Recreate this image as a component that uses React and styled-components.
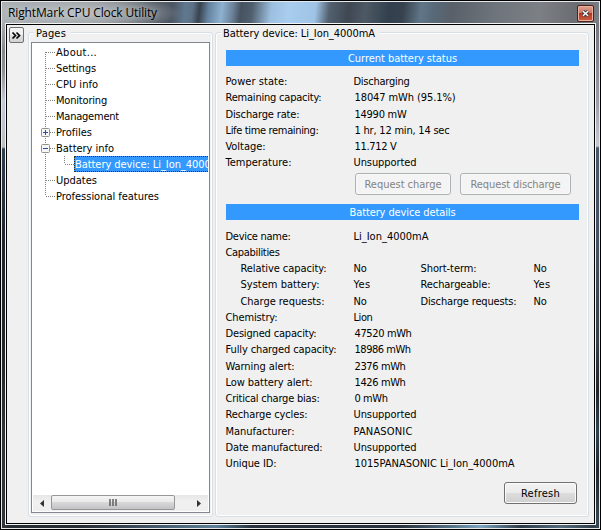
import React, { useLayoutEffect, useRef, useState } from "react";
import styled, { createGlobalStyle } from "styled-components";

const Global = createGlobalStyle`
  * { box-sizing: border-box; }
  body { margin: 0; width: 601px; height: 530px; overflow: hidden; background: #fff; }
`;

const Frame = styled.div`
  width: 601px;
  height: 530px;
  border: 1px solid #000;
  background:
    linear-gradient(180deg, #b4babd 0 12px, #85888b 50px, #8c9196 70px, #c3cbd6 100px, #b9bec4 146px, #2f3f4e 148px, #1f252d 240px, #22262d 350px, #30353b 440px, #30353b) 0 0 / 6px 100% no-repeat,
    linear-gradient(180deg, #6d6e73, #80838c 50px, #9a9da6 100px, #c6c9d0 145px, #4b586b 147px, #465266 240px, #3a4149 340px, #22252a 390px, #2d4454 430px, #22262c 470px, #33454f 520px) 100% 0 / 6px 100% no-repeat,
    linear-gradient(90deg, #282d34 0 80px, #35424f 120px, #5d8099 215px, #2a3440 250px, #29333e 400px, #537186 450px, #7da3bf 480px, #2e3b47 520px, #516b7e 560px, #2b343e) 0 100% / 100% 6px no-repeat,
    #353d47;
  font-family: "DejaVu Sans Condensed", "DejaVu Sans", sans-serif;
  font-stretch: condensed;
  font-size: 11px;
  line-height: 18px;
  color: #000;
  white-space: pre;
`;

const Highlight = styled.div`
  width: 100%;
  height: 100%;
  border: 1px solid #e6e9ec;
  padding: 0 3px 3px;
  display: flex;
  flex-direction: column;
`;

const TitleBar = styled.header`
  height: 21px;
  flex: none;
  margin: 0 -3px;
  padding: 0 5px 0 6px;
  display: flex;
  justify-content: space-between;
  background:
    radial-gradient(ellipse 100px 17px at 80px 11px, rgba(205, 209, 212, 0.65), rgba(190, 195, 199, 0.45) 60%, transparent),
    linear-gradient(97deg, #aab0b3 0, #8d9295 90px, #59616a 150px, #4c5663 170px, #607990 183px, #5d7186 190px, #39434f 197px, #6583a0 206px, #8fb1d0 219px, #6c829a 230px, #46525f 238px, #4f5e6e 249px, #9cbfdf 268px, #a9cdee 285px, #9fc3e4 312px, #52606f 326px, #3f4852 345px, #4d5964 362px, #32404f 385px, #37424e 399px, #607688 417px, #586978 430px, #596069 448px, #6e747b 490px, #7c8085 535px, #6a6d72 570px, #7b7e84);
`;

const Title = styled.div`
  font-family: "Open Sans", "Noto Sans", sans-serif;
  font-stretch: normal;
  font-size: 12px;
  line-height: 22px;
  text-shadow: 0 0 5px rgba(255, 255, 255, 0.5);
`;

const CloseButton = styled.button`
  width: 17px;
  height: 17px;
  margin-top: 3px;
  padding: 0;
  display: grid;
  place-items: center;
  border: 1px solid #52201a;
  border-radius: 2px;
  box-shadow: inset 0 0 0 1px #eab09f;
  background: linear-gradient(#dfa195, #cf7360 48%, #b8351c 50%, #c96045);
`;

const Client = styled.main`
  flex: 1;
  min-height: 0;
  border: 1px solid #f4f4f4;
  display: flex;
`;

const ClientInner = styled.div`
  flex: 1;
  border: 1px solid #000;
  background: #f0f0f0;
  padding: 2px 4px 6px 2px;
  display: flex;
  align-items: flex-start;
`;

const ToggleButton = styled.button`
  width: 15px;
  height: 16px;
  padding: 0;
  display: grid;
  place-items: center;
  border: 1px solid #707070;
  border-radius: 2px;
  background: linear-gradient(#f4f4f4, #eee 50%, #dedede 50%, #d2d2d2);
`;

const Group = styled.section`
  width: ${(p) => p.$width}px;
  height: 485px;
  margin: 5px 0 0 ${(p) => p.$gap}px;
  border: 1px solid #d5dfe5;
  border-radius: 3px;
  box-shadow: inset 0 0 0 1px #fff;
  display: flex;
  flex-direction: column;
  padding: 0 ${(p) => p.$right}px 3px ${(p) => p.$left}px;
`;

const Legend = styled.div`
  align-self: flex-start;
  height: 16px;
  margin: -8px 0 0 ${(p) => p.$indent}px;
  padding: 0 5px 0 2px;
  background: #f0f0f0;
`;

const Tree = styled.div`
  flex: 1;
  margin: 1px 0 0;
  border: 1px solid #828790;
  background: #fff;
  padding: 1px;
  display: flex;
  flex-direction: column;
  justify-content: space-between;
  overflow: hidden;
`;

const TreeRow = styled.div`
  display: flex;
  height: 16px;
  align-items: stretch;
`;

const Branch = styled.svg`
  flex: none;
  display: block;
`;

const Node = styled.div`
  flex: ${(p) => (p.$selected ? "1" : "none")};
  min-width: 0;
  overflow: hidden;
  color: ${(p) => (p.$selected ? "#fff" : "#000")};
  background: ${(p) => (p.$selected ? "#3399ff" : "transparent")};
  border: ${(p) => (p.$selected ? "1px dotted #3a2a10" : "0")};
  border-right: 0;
  line-height: ${(p) => (p.$selected ? 16 : 18)}px;
`;

const ScrollBar = styled.div`
  height: 16px;
  display: flex;
  background: linear-gradient(#e6e6e6, #f0f0f0 40%, #efefef);
`;

const ScrollArrow = styled.div`
  width: 18px;
  display: grid;
  place-items: center;
`;

const Thumb = styled.div`
  width: 124px;
  height: 15px;
  border: 1px solid #979797;
  border-radius: 2px;
  background: linear-gradient(#f5f5f5, #e9e9eb 48%, #d8d8da 50%, #c3c3c7);
  display: grid;
  place-items: center;
`;

const Track = styled.div`
  flex: 1;
`;

const Banner = styled.div`
  height: 16px;
  flex: none;
  margin: ${(p) => p.$top}px 0 ${(p) => p.$bottom}px;
  background: #3399ff;
  color: #fff;
  text-align: center;
`;

const Row = styled.div`
  height: 16.25px;
  flex: none;
  margin-left: -0.5px;
  display: grid;
  grid-template-columns: ${(p) => (p.$nested ? "15px 113px 67px 113px 1fr" : "128px 1fr")};
`;

const Cell = styled.div`
  padding-left: ${(p) => (p.$nudge ? 1 : 0)}px;
`;

const Actions = styled.div`
  display: flex;
  justify-content: flex-end;
  gap: 9px;
  flex: none;
  margin: ${(p) => p.$top}px ${(p) => p.$right}px 0 0;
`;

const Button = styled.button`
  width: ${(p) => p.$width}px;
  height: 22px;
  padding: 2px 0 0;
  font: inherit;
  line-height: 18px;
  border: 1px solid ${(p) => (p.disabled ? "#adb2b5" : "#707070")};
  border-radius: 3px;
  color: ${(p) => (p.disabled ? "#838383" : "#000")};
  background: ${(p) => (p.disabled ? "#f4f4f4" : "linear-gradient(#f2f2f2, #ebebeb 50%, #dddddd 50%, #cfcfcf)")};
  box-shadow: inset 0 0 0 1px ${(p) => (p.disabled ? "#f8f8f8" : "#fbfbfb")};
`;

const Run = styled.span`
  display: inline-block;
  white-space: pre;
`;

/* Tracks a run of text so that it fills the given width. */
function Text({ w, children }) {
  const ref = useRef(null);
  const [spacing, setSpacing] = useState(0);
  useLayoutEffect(() => {
    const natural = ref.current.getBoundingClientRect().width;
    setSpacing((w - natural) / children.length);
  }, [w, children]);
  return <Run ref={ref} style={{ letterSpacing: `${spacing}px` }}>{children}</Run>;
}

const tree = [
  { label: "About...", w: 41 },
  { label: "Settings", w: 40 },
  { label: "CPU info", w: 42 },
  { label: "Monitoring", w: 51 },
  { label: "Management", w: 63 },
  { label: "Profiles", w: 36, box: "+" },
  { label: "Battery info", w: 58, box: "-" },
  { label: "Battery device: Li_Ion_4000mA", w: 152, child: true },
  { label: "Updates", w: 41 },
  { label: "Professional features", w: 103, last: true },
];

function Lines({ item, first }) {
  const width = item.child ? 41 : 23;
  const dots = { stroke: "#808080", strokeDasharray: "1 1", fill: "none" };
  return (
    <Branch width={width} height="16" viewBox={`0 0 ${width} 16`}>
      <path d={`M12.5 ${first ? 8 : 0}V${item.last ? 8 : 16}`} {...dots} />
      {item.child ? (
        <path d="M31.5 0V8M32 8.5H41" {...dots} />
      ) : (
        <path d="M13 8.5H22" {...dots} />
      )}
      {item.box && (
        <>
          <rect x="8.5" y="4.5" width="8" height="8" rx="1" fill="#f6f6f6" stroke="#919191" />
          <path d={item.box === "+" ? "M10 8.5H15M12.5 6V11" : "M10 8.5H15"} stroke="#2b4c9b" />
        </>
      )}
    </Branch>
  );
}

const status = [
  ["Power state:", 62, "Discharging", 56],
  ["Remaining capacity:", 96, "18047 mWh (95.1%)", 101],
  ["Discharge rate:", 74, "14990 mW", 52],
  ["Life time remaining:", 93, "1 hr, 12 min, 14 sec", 95],
  ["Voltage:", 40, "11.712 V", 42],
  ["Temperature:", 66, "Unsupported", 63],
];

const capabilities = [
  ["Relative capacity:", 86, "No", 13, "Short-term:", 56, "No", 13],
  ["System battery:", 79, "Yes", 17, "Rechargeable:", 70, "Yes", 17],
  ["Charge requests:", 84, "No", 13, "Discharge requests:", 96, "No", 13],
];

const details = [
  ["Chemistry:", 52, "Lion", 19],
  ["Designed capacity:", 91, "47520 mWh", 57],
  ["Fully charged capacity:", 111, "18986 mWh", 56],
  ["Warning alert:", 69, "2376 mWh", 51],
  ["Low battery alert:", 87, "1426 mWh", 51],
  ["Critical charge bias:", 94, "0 mWh", 33],
  ["Recharge cycles:", 82, "Unsupported", 63],
  ["Manufacturer:", 69, "PANASONIC", 59],
  ["Date manufactured:", 97, "Unsupported", 63],
  ["Unique ID:", 51, "1015PANASONIC Li_Ion_4000mA", 160],
];

function Cells({ cells, nested }) {
  const out = [];
  for (let i = 0; i < cells.length; i += 2) {
    out.push(
      <Cell key={i} $nudge={/^\d/.test(cells[i])}>
        <Text w={cells[i + 1]}>{cells[i]}</Text>
      </Cell>
    );
  }
  return <Row $nested={nested}>{nested && <div />}{out}</Row>;
}

export default function App() {
  return (
    <>
      <Global />
      <Frame>
        <Highlight>
          <TitleBar>
            <Title><Text w={149}>RightMark CPU Clock Utility</Text></Title>
            <CloseButton aria-label="Close">
              <svg width="9" height="9" viewBox="0 0 9 9">
                <path d="M2 2.2L7 6.8M7 2.2L2 6.8" stroke="#40404c" strokeWidth="3.4" />
                <path d="M2 2.2L7 6.8M7 2.2L2 6.8" stroke="#fff" strokeWidth="1.5" />
              </svg>
            </CloseButton>
          </TitleBar>
          <Client>
            <ClientInner>
              <ToggleButton aria-label="Expand">
                <svg width="11" height="9" viewBox="0 0 11 9">
                  <path d="M1.5 1.5L4.5 4.5L1.5 7.5M5.5 1.5L8.5 4.5L5.5 7.5" fill="none" stroke="#000" strokeWidth="1.7" />
                </svg>
              </ToggleButton>
              <Group $width={185} $gap={4} $left={2} $right={2}>
                <Legend $indent={3}><Text w={30}>Pages</Text></Legend>
                <Tree>
                  <div>
                    {tree.map((item, i) => (
                      <TreeRow key={item.label}>
                        <Lines item={item} first={i === 0} />
                        <Node $selected={item.child}><Text w={item.w}>{item.label}</Text></Node>
                      </TreeRow>
                    ))}
                  </div>
                  <ScrollBar>
                    <ScrollArrow>
                      <svg width="4" height="7"><path d="M4 0V7L0 3.5Z" fill="#333" /></svg>
                    </ScrollArrow>
                    <Thumb>
                      <svg width="8" height="7">
                        <path d="M1 0V7M4 0V7M7 0V7" stroke="#555" strokeWidth="1.4" />
                      </svg>
                    </Thumb>
                    <Track />
                    <ScrollArrow>
                      <svg width="4" height="7"><path d="M0 0V7L4 3.5Z" fill="#333" /></svg>
                    </ScrollArrow>
                  </ScrollBar>
                </Tree>
              </Group>
              <Group $width={374} $gap={2} $left={10} $right={9}>
                <Legend $indent={-5}><Text w={152}>Battery device: Li_Ion_4000mA</Text></Legend>
                <Banner $top={9} $bottom={7}><Text w={109}>Current battery status</Text></Banner>
                {status.map((r) => <Cells key={r[0]} cells={r} />)}
                <Actions $top={2} $right={8}>
                  <Button disabled $width={96}><Text w={77}>Request charge</Text></Button>
                  <Button disabled $width={111}><Text w={90}>Request discharge</Text></Button>
                </Actions>
                <Banner $top={9} $bottom={8}><Text w={106}>Battery device details</Text></Banner>
                <Cells cells={["Device name:", 65, "Li_Ion_4000mA", 75]} />
                <Cells cells={["Capabilities", 54]} />
                {capabilities.map((r) => <Cells key={r[0]} cells={r} nested />)}
                {details.map((r) => <Cells key={r[0]} cells={r} />)}
                <Actions $top={10.5} $right={2}>
                  <Button $width={73}><Text w={39}>Refresh</Text></Button>
                </Actions>
              </Group>
            </ClientInner>
          </Client>
        </Highlight>
      </Frame>
    </>
  );
}
